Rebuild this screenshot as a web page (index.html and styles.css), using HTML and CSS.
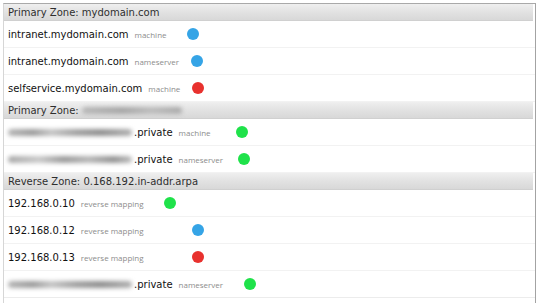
FILE: index.html
```html
<!DOCTYPE html>
<html>
<head>
<meta charset="utf-8">
<link rel="stylesheet" href="styles.css">
</head>
<body>
<div class="panel">
  <div class="zone-head">Primary Zone: mydomain.com</div>
  <div class="row" style="--col:179px"><div class="txt"><span class="name">intranet.mydomain.com</span><span class="kind">machine</span></div><span class="dot blue"></span></div>
  <div class="row" style="--col:183px"><div class="txt"><span class="name">intranet.mydomain.com</span><span class="kind">nameserver</span></div><span class="dot blue"></span></div>
  <div class="row" style="--col:184px"><div class="txt"><span class="name">selfservice.mydomain.com</span><span class="kind">machine</span></div><span class="dot red"></span></div>

  <div class="zone-head">Primary Zone: <span class="smudge head-smudge"></span></div>
  <div class="row" style="--col:228px"><div class="txt"><span class="smudge name-smudge"></span><span class="name">.private</span><span class="kind">machine</span></div><span class="dot green"></span></div>
  <div class="row" style="--col:230px"><div class="txt"><span class="smudge name-smudge alt"></span><span class="name">.private</span><span class="kind">nameserver</span></div><span class="dot green"></span></div>

  <div class="zone-head">Reverse Zone: 0.168.192.in-addr.arpa</div>
  <div class="row" style="--col:156px"><div class="txt"><span class="name">192.168.0.10</span><span class="kind">reverse mapping</span></div><span class="dot green"></span></div>
  <div class="row" style="--col:184px"><div class="txt"><span class="name">192.168.0.12</span><span class="kind">reverse mapping</span></div><span class="dot blue"></span></div>
  <div class="row" style="--col:184px"><div class="txt"><span class="name">192.168.0.13</span><span class="kind">reverse mapping</span></div><span class="dot red"></span></div>
  <div class="row last" style="--col:236px"><div class="txt"><span class="smudge name-smudge"></span><span class="name">.private</span><span class="kind">nameserver</span></div><span class="dot green"></span></div>
</div>
</body>
</html>
```

FILE: styles.css
```css
html, body {
  margin: 0;
  padding: 0;
  background: #ffffff;
}
body {
  font-family: "DejaVu Sans", "Open Sans", sans-serif;
  width: 540px;
  height: 303px;
  overflow: hidden;
}
.panel {
  margin: 3px 0 0 3px;
  width: 531px;
  height: 310px;
  border-top: 1px solid #a9a9a9;
  border-left: 1px solid #d6d6d6;
  border-right: 1px solid #a3a3a3;
  box-sizing: content-box;
}
.zone-head {
  height: 16px;
  margin-right: 2px;
  padding-left: 4px;
  display: flex;
  align-items: center;
  font-size: 10px;
  color: #2e2e2e;
  background: linear-gradient(#efefef, #e2e2e2 50%, #d8d8d8);
  border-bottom: 1px solid #d0d0d0;
  white-space: pre;
}
.row {
  height: 26px;
  padding-left: 4px;
  display: grid;
  grid-template-columns: var(--col) 12px;
  align-items: center;
  border-bottom: 1px solid #f2f2f2;
}
.row.last {
  border-bottom-color: #ececec;
}
.txt {
  display: flex;
  align-items: center;
  white-space: nowrap;
}
.name {
  font-size: 10px;
  color: #111111;
}
.kind {
  font-family: "Open Sans", sans-serif;
  font-size: 8px;
  color: #8c8c8c;
  margin-left: 6px;
}
.dot {
  width: 12px;
  height: 12px;
  border-radius: 50%;
}
.blue { background: #35a4e6; }
.red { background: #e8312e; }
.green { background: #1fe24a; }
.smudge {
  display: inline-block;
  border-radius: 5px;
  filter: blur(2px);
}
.name-smudge {
  width: 124px;
  height: 7px;
  margin-right: 2px;
  background: linear-gradient(90deg, #b5b5b5, #9b9b9b 20%, #c4c4c4 35%, #a0a0a0 55%, #8f8f8f 75%, #b0b0b0);
}
.name-smudge.alt {
  background: linear-gradient(90deg, #a8a8a8, #c8c8c8 25%, #9a9a9a 45%, #b6b6b6 65%, #939393 85%, #bdbdbd);
}
.head-smudge {
  width: 100px;
  height: 7px;
  background: linear-gradient(90deg, #b8b8b8, #a6a6a6 40%, #bcbcbc 70%, #aaaaaa);
}
```
